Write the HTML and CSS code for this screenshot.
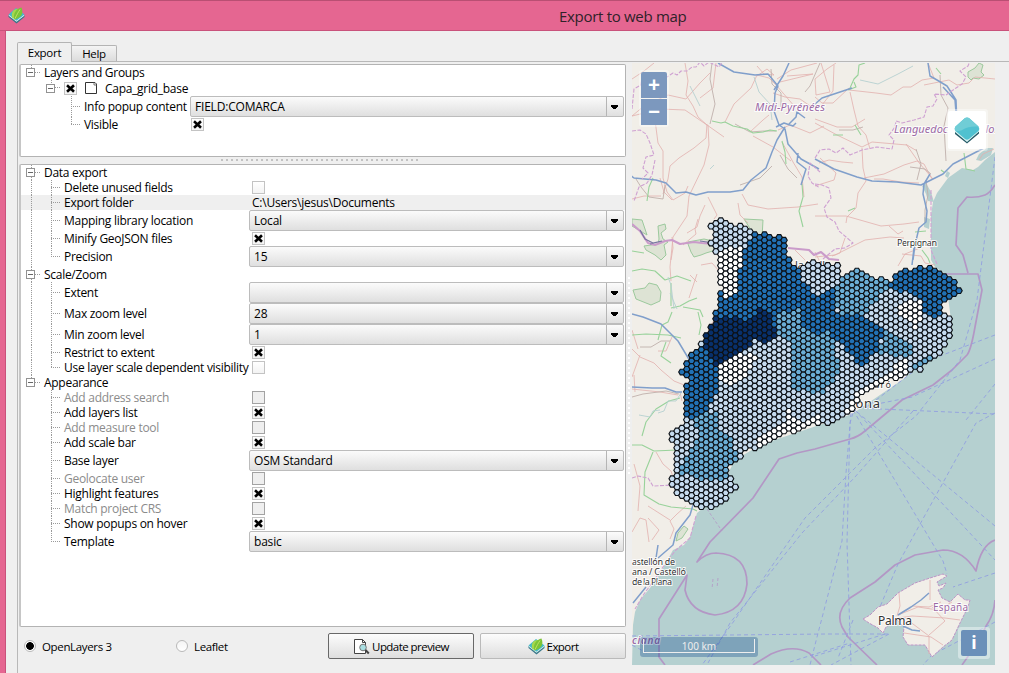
FILE: index.html
```html
<!DOCTYPE html>
<html lang="en">
<head>
<meta charset="utf-8">
<title>Export to web map</title>
<link rel="stylesheet" href="styles.css">
</head>
<body>
<svg class="defs" width="0" height="0">
  <symbol id="logo" viewBox="0 0 17 17">
    <path d="M.5 10l8 6.500 8-6.500v-2H.5z" fill="#397789"/>
    <path d="M.5 8.500l8 6.300 8-6.300L8.500 2z" fill="#e4f8f4"/>
    <path d="M.5 7.500L8 1l8.500 6.500-8 6.200z" fill="#45b9c9"/>
    <path d="M4.500 11.500C2.500 6 5 2 9.500 2c2.500 2 1.500 7-5 9.500z" fill="#a5d84c"/>
    <path d="M6 12.500C5 6 8.500 1.500 13.500.5c2.500 6-.5 11-7.500 12z" fill="#7cc437"/>
    <path d="M7 11.500c2-4 3-6 5-9" fill="none" stroke="#c4e56a" stroke-width=".9"/>
  </symbol>
  <symbol id="cross" viewBox="1 1 11 11">
    <path d="M4 4.200l5 4.600M9 4.200l-5 4.600" stroke="#000" stroke-width="2.600" stroke-linecap="square"/>
  </symbol>
</svg>
<div class="window">
  <header class="titlebar"><svg class="app-icon"><use href="#logo"/></svg><h1>Export to web map</h1></header>
  <main class="body">
    <nav class="tabs"><span class="tab active">Export</span><span class="tab">Help</span></nav>
    <div class="page">
      <section class="left">
        <div class="panel layers">
          <div class="row"><i class="root first"><b></b></i><span>Layers and Groups</span></div>
          <div class="row layer"><i class="sub"><b></b></i><svg class="check on"><use href="#cross"/></svg><svg class="shape" viewBox="0 0 14 14"><path d="M1.500 1.500h9.500l1.500 1.500v9.500h-11z" fill="#fff" stroke="#333"/><path d="M10 1v3h3" fill="none" stroke="#555" stroke-width=".8"/></svg><span>Capa_grid_base</span></div>
          <div class="row tall deep"><i class="branch"></i><span class="label">Info popup content</span><div class="combo"><span>FIELD:COMARCA</span></div></div>
          <div class="row deep"><i class="branch last"></i><span class="label">Visible</span><svg class="check on"><use href="#cross"/></svg></div>
        </div>
        <div class="splitter"></div>
        <div class="panel settings">
          <div class="row"><i class="root first"><b></b></i><span>Data export</span></div>
          <div class="row"><i class="trunk"></i><i class="branch"></i><span class="label">Delete unused fields</span><svg class="check"></svg></div>
          <div class="row selected"><i class="trunk"></i><i class="branch"></i><span class="label">Export folder</span><span class="path">C:\Users\jesus\Documents</span></div>
          <div class="row tall"><i class="trunk"></i><i class="branch"></i><span class="label">Mapping library location</span><div class="combo"><span>Local</span></div></div>
          <div class="row"><i class="trunk"></i><i class="branch"></i><span class="label">Minify GeoJSON files</span><svg class="check on"><use href="#cross"/></svg></div>
          <div class="row tall"><i class="trunk"></i><i class="branch last"></i><span class="label">Precision</span><div class="combo"><span>15</span></div></div>
          <div class="row"><i class="root"><b></b></i><span>Scale/Zoom</span></div>
          <div class="row tall"><i class="trunk"></i><i class="branch"></i><span class="label">Extent</span><div class="combo"></div></div>
          <div class="row tall"><i class="trunk"></i><i class="branch"></i><span class="label">Max zoom level</span><div class="combo"><span>28</span></div></div>
          <div class="row tall"><i class="trunk"></i><i class="branch"></i><span class="label">Min zoom level</span><div class="combo"><span>1</span></div></div>
          <div class="row"><i class="trunk"></i><i class="branch"></i><span class="label">Restrict to extent</span><svg class="check on"><use href="#cross"/></svg></div>
          <div class="row"><i class="trunk"></i><i class="branch last"></i><span class="label">Use layer scale dependent visibility</span><svg class="check"></svg></div>
          <div class="row"><i class="root end"><b></b></i><span>Appearance</span></div>
          <div class="row off"><i class="gap"></i><i class="branch"></i><span class="label">Add address search</span><svg class="check"></svg></div>
          <div class="row"><i class="gap"></i><i class="branch"></i><span class="label">Add layers list</span><svg class="check on"><use href="#cross"/></svg></div>
          <div class="row off"><i class="gap"></i><i class="branch"></i><span class="label">Add measure tool</span><svg class="check"></svg></div>
          <div class="row"><i class="gap"></i><i class="branch"></i><span class="label">Add scale bar</span><svg class="check on"><use href="#cross"/></svg></div>
          <div class="row tall"><i class="gap"></i><i class="branch"></i><span class="label">Base layer</span><div class="combo"><span>OSM Standard</span></div></div>
          <div class="row off"><i class="gap"></i><i class="branch"></i><span class="label">Geolocate user</span><svg class="check"></svg></div>
          <div class="row"><i class="gap"></i><i class="branch"></i><span class="label">Highlight features</span><svg class="check on"><use href="#cross"/></svg></div>
          <div class="row off"><i class="gap"></i><i class="branch"></i><span class="label">Match project CRS</span><svg class="check"></svg></div>
          <div class="row"><i class="gap"></i><i class="branch"></i><span class="label">Show popups on hover</span><svg class="check on"><use href="#cross"/></svg></div>
          <div class="row tall"><i class="gap"></i><i class="branch last"></i><span class="label">Template</span><div class="combo"><span>basic</span></div></div>
        </div>
        <footer class="actions">
          <label class="choice"><i class="radio picked"></i>OpenLayers 3</label>
          <label class="choice"><i class="radio"></i>Leaflet</label>
          <button class="button default"><svg class="preview-icon" viewBox="0 0 17 17"><path d="M1.500 1.500h8l3 3v11h-11z" fill="#fff" stroke="#444"/><path d="M9.500 1.500v3h3" fill="none" stroke="#444"/><circle cx="10" cy="9.500" r="3.300" fill="#a9dfe2" stroke="#777"/><path d="M12.500 12l3.300 3.500" stroke="#444" stroke-width="2"/></svg>Update preview</button>
          <button class="button"><svg class="export-icon"><use href="#logo"/></svg>Export</button>
        </footer>
      </section>
      <div class="grip"></div>
      <section class="map">
        <svg class="canvas" viewBox="632 63 363 602" width="363" height="602">
          <rect x="632" y="63" width="363" height="602" fill="#f1eee8"/>
          <path class="sea" d="M995 152L985 160 978 167 973 170 962 168 948 178 937 193 933 202 931 215 931 260 935 267 945 274 951 320 905 378 852 414 760 445 735 460 722 485 703 508 697 513 690 537 684 545 673 550 667 561 659 575 650 588 640 600 635 612 633 625 632 665H995z"/>
          <g class="sea"><path d="M976 160l3-6 8-6 6 0-2 7-10 6zM922 186l4-3 5 9 3 10-6-1-2-7zM924 217l6 2-1 10-5-2zM947 171l3 2-2 5-3-2z"/></g>
          <g class="park"><path d="M632 219l10 1 3 9 2 6-15-9zM658 226l7-2 1 5-5 4 2 6 5 3-4 3 2 10-5 5-6-5-9-5-2-4 14-2 1-5zM688 242l16-3 9 2 3 9-10 3-5 2-7 2-3-5-3-8zM744 219l19 1-1 18-9-5zM633 290l12-2 4-5 8 2 4 7-1 9-9 4-15-6zM968 72l7-4 4-5 4 2-2 7 3 3-5 4-6-1-2 2-3-3zM678 533l6-7 4 3-6 9-6 3z"/></g>
          <g class="minor">
            <path d="M632 79l12-8 10-8M685 63l3 18-2 14 7 11 5 11 9 8M700 98l13-10 3-25M632 116l12-10 24-11 18 4 14-16 10-10M632 116l29-7 24 1 22 15 17 12M707 124l-1 14-12 10-15 10-9 8-2 13-5 15M655 120l3 23 5 8 0 27 4 14 6 8 12-7 3-7M708 125l1 20-5 20-15 31-2 20-14 21-3 30 1 14M725 122l9-18 17-16 6-13 12 3 8 8 18 21M757 76l10-7 7 6-10-1-7-8M777 79l14-9 26-7M780 82l33-8-26 2M773 93l12 4 15 2 19 13M750 132l13-12 6-5M778 130l12-5 20 8 14-7M708 197l9 18-3 4M742 194l6 11 20 4 30-2 20-3M753 136l20 11 18 14M782 142l11 20 9 15 2 20M821 63l9 29-14 3-1-16 12-10 9-6M849 90l27 3 15 2 12-8 8 0 11-7 12-2-6-15M815 97l7 6 11 0 16-15M850 92l4 18 4 16 8 9 4 14M815 119l22 8 15 0 13-8M815 123l22 12 25 12 10-5 35 3 10 6M862 148l1 20 3 13-8 12-2 15-9 9-1 6M819 163l10-3 13 2 11 1M864 178l20-4 20-9 13-4 7 3 8 15M874 179l9 0 18 3 18 1M815 216l31 0 35 10 23-2 15-2M906 144l14 20 13 15M815 186l19-6 2-7-16-15M822 105l11-14 1-26M632 199l12-3 17 0M660 178l4 14 8 8M738 203l2 12 8 8M832 256l8-3 5-15M815 257l20-2 30-15 25-3 14 1M889 226l9 8 5-3M902 254l19 2 4 7 10 2M898 266l7-12 15-6M924 85l25-5 8 5 12-2 6-6 20 2M979 160l4-6 11-5"/>
            <path d="M698 219l-3 10 1 5-6 5-7 6M705 205l-5 11-3 11-10 6M632 349l8 8 14 6 7 7 13 11 15 6M640 355l-8 22M638 349l-6-19M672 237l1 11-2 12M717 316l-7 10-2 6M690 275l7 7M701 265l11-2 8 9M697 274l-8 24M721 270l9 9M634 375l1 17M632 389l28 3 18 3M672 337l-6 14-8 0M680 392l2 9M656 452l7 12 8 7 4 12M634 464l6 22-2 25M632 532l8-14 6 2 3 22M686 506l-9 8-7 7 4 8-4 10M670 520l-22-14M652 540l7-10-11-12M795 250l12 12M815 252l5 10 10 1"/>
          </g>
          <g class="dark-road"><path d="M712 63l-2 16 5 25-5 20M771 69l1 15 9 9 0 19M735 124l15 8 14-1 12 0M839 130l14 0 10-3M665 185l-2 14-14-2-8-10-5-8M740 185l20-7 12-12M780 155l8 14 9 9M940 75l1 20 7 13-4 18 2 35M926 180l2 15-3 15 0 12M640 347l11 0 10-6 9 0M632 397l11-3 23-3 13 3M820 63l-10 23-5 6M910 167l15 2 6 5M917 180l4-16-5-15"/></g>
          <g class="green"><path d="M712 121l9 2 4-1 8 4 14 3 6 4 10-1 7-2 7 1M782 141l3 11 1 12M802 184l1 13-4 14 4 16M653 178l-4 9-2 14M632 251l12 2M632 271l10-2 13 2 10 9 12-4 14 5M671 283l0 23M671 308l9-2 9-5 8-3M683 307l17 3 3 7M672 312l-4 10-6 3-4 15M632 335l14-1 22 1 13 3M698 312l3 13-2 10M666 342l-5 14 10 7M680 398l-11 3-13 8-10 13-4 14M632 445l10 0 12 6 23-1M653 452l-8 20-1 23 15 9 12 3 22 2 4 2M850 88l4-9 4-4 1-10 6-2M848 90l8-3-2-5M855 125l6 10M833 135l10 0M855 208l-7 3M964 153l2 16 9 2M915 232l11-1M922 250l6 8 2 5M936 68l5 6M941 170l4 3"/></g>
          <g class="motorway"><path d="M718 63l16 9 21 3 13-1 10 12-3 7-1 18 5 14 6 4 3 15 13 15 18 10M774 90l9-14 6-13M785 127l-8 13-5 12-6 16-15 12-8 10-13 2-22 0-12 3-10-3-10 1-10-10-10-3-22-2-9-7M798 153l-1 9 9 7-5 16M789 124l7-7 1-5 8 6M815 159l19 10 23 8 15 4 25 1 24 3 22-11 10-10 31-16M815 104l7-6 18-6 12-4M928 63l2 13 7 4 10 6 9 14 1 25M930 174l-6 10-1 10 4 17-1 11-7 6-4 17-2 15M914 248l-2 17M632 314l11 3 18 7 10 10 7 7 12 20M632 387l20 1 13 0 11 4 6 0M693 505l-3 10-14 18-3 12-15 13M658 545l-2 13M646 587l-13 16M943 87l12 13 2 25M776 127l8-4 9 3 3-3"/></g>
          <g class="admin"><path d="M632 109l2-20 7-4 1-8 13-4 12 4 6-4 4 2 4-4 6 0 5-4 4 0 4-5 4 4 5-4 10 5 5-7M632 131l8-1 6 4 4 9 4 12-8 2-3 11 5 5-6 6M655 160l-3 15-5 8-8 4-5 14M815 158l5-8 9-1 7 4 7-5 7 7 12-5 15-3 15 2 2-9-5-5 6-8 1-6 6 2 12-3 10-3 3-10 6-1 4-7-3-5 12 1 10-7 6-4 4-7-6-6 8-5 5-12-4-7M815 184l7 1 7 3 2 10-7 10 3 9 8 5 4 9 14 12-8 5-10 1-12 10M632 478l6-2 10 2 5 8 21-1M820 172l-10-9-2 13 4 7 8 5M931 190l0 60 6 14M696 516l-6 22-14 12-9 11-10 15-13 18-9 15"/></g>
          <path class="frontier" d="M632 224l8 7 8 12 7 2 10-4 7-1 8 4 14-2 8 1 12 1M788 248l21 2 5 5 7-3 8 7 10 1"/>
          <path class="frontier-core" d="M640 230l5 9 8 4 9-2M700 241l7 1 7 0M650 244l8-2"/>
          <path class="river" d="M668 277l3 8 3 24M670 293l7 16M658 413l6-2 4-10 8 0 5-8M639 415l11 2 3-6 7-1M690 86l10 20M754 77l5 15 11 12 2 16M710 169l4-4M860 80l18 4 20-10 15-8"/>
          <g class="sea-border"><path d="M995 185Q990 193 985 195Q977 198 967 197L958 208 956 245 963 255 968 273M938 274H978L982 290 975 327Q971 350 967 355L952 370 933 385 902 400 865 431Q858 437 850 439L815 449 797 453 779 459 753 498 710 542 697 562Q706 553 716 553Q747 554 747 584Q744 612 715 615Q690 612 685 590L687 575 659 619V657L665 665M995 540Q981 545 976 571Q963 550 943 550L915 555 895 565 875 582 850 598Q835 612 842 627L848 637 877 665M753 665L771 654Q793 644 809 653L821 665M962 665Q980 640 986 626 994 615 995 600"/></g>
          <g class="ferry"><path d="M995 157L977 300l-17 60-44 56-41 32-70 70-71 103-32 44M995 335l-68 26-60 46M995 359l-83 38-55 11M853 410l90 151 4 13M855 410l140 150M857 412l138 114M857 408l138 6M995 413l-19 10-78 141-26 62M853 413l-3 10-3 120 4 122M851 413l-5 60-4 68-26 100-6 24M995 384l-29 36M913 411l-58 66-53 56-72 90-22 40M632 636l195-2 62 0M632 645l15 8M853 620l-15 38M885 634l-70 22M889 634l-58 31M790 662l60-19M995 573l-42 14M995 622l-63 33-9 10"/></g>
          <path class="limit" d="M707 509l15 22M713 579l-1 10M718 578l-1 10"/>
          <path class="island" d="M863 619L870 615 878 607 887 604 898 593 915 583 930 578 943 574 947 576 937 582 939 586 946 583 943 588 938 590 942 598 950 602 958 594 965 600 970 600 968 607 960 623 952 640 943 647 932 657 925 645 908 645 903 637 904 627 897 620 886 627 883 633 878 628 869 623z"/>
          <g class="minor"><path d="M897 616l3-10-1-13M898 618l14-2 33 2 15 2M898 615l20-8 20 3 14-8M912 606l17 1 12-5M930 600l0-20M905 618l24 18 0 18M929 635l16-14-13-14M904 633l27 4 12 8"/></g>
          <g class="motorway"><path d="M898 615l13-8 10-7 8-7M903 626l9 4 8 1"/></g>
          <g class="labels">
            <text class="place" x="795" y="269" font-size="11">la Vella</text>
            <text class="place" x="863" y="388" font-size="9" textLength="28">ataró</text>
            <text class="place" x="814" y="408" font-size="13" textLength="66">Barcelona</text>
          </g>
          <g id="hexes"></g>
          <g class="labels">
            <text class="region" x="755" y="111" font-size="11" textLength="70">Midi-Pyrénées</text>
            <text class="region" x="894" y="133" font-size="11" textLength="107" lengthAdjust="spacingAndGlyphs">Languedoc-Roussillon</text>
            <text class="place" x="897" y="246" font-size="9" textLength="40">Perpignan</text>
            <text class="place" x="632" y="564.500" font-size="9" textLength="43">astellón de</text>
            <text class="place" x="632" y="574.500" font-size="9" textLength="54">ana / Castelló</text>
            <text class="place" x="632" y="584.500" font-size="9" textLength="40">de la Plana</text>
            <text class="region" x="632" y="644" font-size="10" font-weight="600" textLength="28">ciana</text>
            <text class="place" x="878" y="625" font-size="12" textLength="34">Palma</text>
            <text class="region upright" x="933" y="611" font-size="10" textLength="35">España</text>
          </g>
        </svg>
        <div class="zoom"><span>+</span><span>−</span></div>
        <div class="switcher"><svg viewBox="0 0 28 28"><path d="M2 15l12 10 12-10v2.500L14 27.500 2 18z" fill="#265b68"/><path d="M2 13l12 10 12-10v2.500L14 26 2 16z" fill="#d8f4f3"/><path d="M12 2q2-1.200 4 0l9.500 8.500q1.500 2 0 4.500L16 23q-2 1.400-4 0l-9.500-8q-1.500-2 0-4.500z" fill="#50c1d0"/><path d="M12 2q2-1.200 4 0l9.500 8.500Q15 10 11 13t-9 1.500q-1-2.500.5-4z" fill="#70cdd6"/></svg></div>
        <div class="scale"><span>100 km</span></div>
        <div class="info"><span>i</span></div>
      </section>
    </div>
  </main>
</div>
<script src="hexes.js"></script>
</body>
</html>
```
FILE: styles.css
```css
* { box-sizing: border-box; }
body { margin: 0; width: 1009px; height: 673px; overflow: hidden; font: 12px/15px "Open Sans", "Noto Sans", sans-serif; color: #000; }
.defs { display: block; }
.window { height: 673px; display: flex; flex-direction: column; background: #e56691; }
.titlebar { height: 31px; flex: none; display: flex; align-items: center; border-top: 1px solid #b94f73; border-bottom: 1px solid #c9527b; }
.app-icon { width: 17px; height: 17px; margin-left: 8px; margin-top: -1px; }
.titlebar h1 { margin: 0 0 0 534px; font-size: 15px; font-weight: 400; line-height: 20px; color: #2f2229; letter-spacing: -.3px; white-space: nowrap; }
.body { flex: 1; margin-left: 5px; border-left: 1px solid #c9527b; background: #efefef; padding: 11px 0 0 11px; min-height: 0; }
.tabs { display: flex; align-items: flex-end; height: 19px; }
.tab { height: 16px; width: 45px; text-align: center; font-size: 11.500px; letter-spacing: -.3px; border: 1px solid #b4b4b4; border-left: 0; border-bottom: 0; border-radius: 0 2px 0 0; background: linear-gradient(#f4f4f4, #dcdcdc); }
.tab.active { height: 20px; width: 55px; line-height: 20px; margin-bottom: -1px; border-left: 1px solid #b4b4b4; border-radius: 2px 2px 0 0; background: #efefef; z-index: 1; }
.page { display: flex; height: 620px; border-top: 1px solid #b8b8b8; border-left: 1px solid #b8b8b8; padding: 2px 0 0 1px; }
.left { width: 607px; flex: none; display: flex; flex-direction: column; }
.panel { background: #fff; border: 1px solid #b3b3b3; border-left-width: 2px; border-left-color: #c6c6c6; border-radius: 2px; padding-right: 1px; flex: none; }
.layers { height: 93px; }
.splitter { height: 7px; flex: none; width: 198px; margin-left: 202px; background: repeating-linear-gradient(90deg, #c2c2c2 0 2px, transparent 2px 5px) 0 2px / 100% 2px no-repeat; }
.settings { height: 463px; }
.row { display: flex; align-items: center; height: 15px; white-space: nowrap; letter-spacing: -.28px; }
.row.tall { height: 21px; }
.row.layer { height: 16px; padding-left: 20px; }
.row.deep { padding-left: 42px; }
.row.selected { background: #efefef; margin-right: -1px; }
.row.off .label { color: #8b8b8b; }
.label { width: 185px; }
.layers .label { width: 106px; }
.row i { flex: none; align-self: stretch; background-repeat: no-repeat; }
.root, .sub { width: 23px; display: flex; align-items: center; padding-left: 5px; background-image: repeating-linear-gradient(90deg, #9a9a9a 0 1px, transparent 1px 2px), repeating-linear-gradient(#9a9a9a 0 1px, transparent 1px 2px); background-size: 5px 1px, 1px 100%; background-position: 14px 7px, 10px 0; }
.root.end, .sub { background-size: 5px 1px, 1px 4px; }
.layers .root { background-size: 5px 1px, 1px 4px; }
.row b { width: 9px; height: 9px; border: 1px solid #929292; background: linear-gradient(#666, #666) center / 5px 1px no-repeat #fff; }
.trunk, .gap { width: 22px; }
.trunk { background-image: repeating-linear-gradient(#9a9a9a 0 1px, transparent 1px 2px); background-size: 1px 100%; background-position: 10px 0; }
.branch { width: 21px; background-image: repeating-linear-gradient(90deg, #9a9a9a 0 1px, transparent 1px 2px), repeating-linear-gradient(#9a9a9a 0 1px, transparent 1px 2px); background-size: 10px 1px, 1px 100%; background-position: 8px 50%, 8px 0; }
.branch.last { background-size: 10px 1px, 1px 50%; }
.check { width: 13px; height: 13px; flex: none; border: 1px solid #c3c3c3; background: linear-gradient(#fff, #f3f3f3); margin-left: 3px; }
.layer .check { margin: 0; }
.layers .deep .check { margin-left: 1px; }
.off .check { border-color: #a3a3a3; background: #efefef; }
.shape { width: 14px; height: 14px; margin: 0 7px; }
.path { margin-left: 3px; letter-spacing: -.24px; }
.combo { flex: 1; height: 21px; display: flex; align-items: center; padding-left: 4px; border: 1px solid #bcbcbc; border-radius: 2px; background: linear-gradient(#fbfbfb, #dfdfdf); letter-spacing: -.2px; }
.combo::after { content: ""; margin-left: auto; width: 16px; height: 19px; border-left: 1px solid #b5b5b5; background: linear-gradient(#000, #000) 4px 8px / 7px 1px no-repeat, linear-gradient(#000, #000) 4px 9px / 7px 1px no-repeat, linear-gradient(#000, #000) 5px 10px / 5px 1px no-repeat, linear-gradient(#000, #000) 6px 11px / 3px 1px no-repeat; }
.actions { display: grid; grid-template-columns: 152px 156px 146px 152px; padding: 6px 0 0 1px; }
.actions .button:last-child { margin-left: 6px; }
.choice { display: flex; align-items: center; gap: 6px; padding-left: 4px; font-size: 11.500px; letter-spacing: -.35px; }
.radio { width: 12px; height: 12px; border-radius: 50%; border: 1px solid #b9b9b9; background: linear-gradient(#f4f4f4, #fff); }
.radio.picked { background: radial-gradient(#000 0 3.500px, #fff 4.200px); }
.button { width: 146px; height: 26px; padding: 0; display: flex; align-items: center; justify-content: center; gap: 2px; border: 1px solid #bababa; border-radius: 2px; background: linear-gradient(#fcfcfc, #dedede); font: 11.500px/15px "Open Sans", sans-serif; letter-spacing: -.55px; color: #000; }
.button.default { border-color: #686868; }
.button svg { width: 17px; height: 17px; }
.grip { width: 6px; flex: none; background: repeating-linear-gradient(#fff 0 2px, transparent 2px 5px) 2px 213px / 2px 197px no-repeat; }
.map { position: relative; width: 363px; height: 602px; margin-top: -1px; overflow: hidden; font-family: "Noto Sans", sans-serif; }
.canvas { display: block; }
.canvas path { fill: none; stroke-linejoin: round; }
.canvas .sea, .canvas .sea path { fill: #b5d0d0; }
.canvas .park path { fill: #dde3d4; stroke: #9cc99d; stroke-width: 1; }
.minor { stroke: #e2b0ad; stroke-width: .8; }
.dark-road { stroke: #c0b0ac; stroke-width: .9; }
.green { stroke: #98d29a; stroke-width: 1.100; }
.motorway { stroke: #809fcb; stroke-width: 1.500; }
.admin { stroke: #cfa1d2; stroke-width: 1.100; stroke-dasharray: 4 1.500; }
.frontier { stroke: #ca9bca; stroke-width: 2.200; }
.frontier-core { stroke: #7775a1; stroke-width: 1.200; }
.river { stroke: #b5d0d0; stroke-width: .9; }
.sea-border { stroke: #b397c5; stroke-width: 1.700; }
.ferry { stroke: #929fe0; stroke-width: .9; stroke-dasharray: 4 3; }
.limit { stroke: #b397c5; stroke-width: .8; stroke-dasharray: 3 2; }
.canvas .island { fill: #f1eee8; stroke: #bd94c6; stroke-width: 1; stroke-dasharray: 3 1; }
.labels text { font-family: "Noto Sans", sans-serif; paint-order: stroke; stroke: #fff; stroke-opacity: .85; stroke-width: 2px; fill: #333; }
.labels .region { fill: #9b6aa5; font-style: italic; }
.labels .upright { font-style: normal; }
#hexes { stroke: #0d1116; stroke-width: 1.150; }
.zoom, .switcher, .scale, .info { position: absolute; border-radius: 3px; background: rgba(255, 255, 255, .4); }
.zoom { left: 7px; top: 7px; padding: 2px; display: grid; gap: 1px; }
.zoom span { width: 26px; height: 26px; background: #7c98be; color: #fff; font: 700 21px/25px "Noto Sans", sans-serif; text-align: center; }
.zoom span:first-child { border-radius: 2px 2px 0 0; }
.switcher { left: 314px; top: 46px; padding: 2px; }
.switcher svg { display: block; width: 38px; height: 38px; padding: 5px; background: #fff; border-radius: 2px; }
.scale { left: 8px; top: 574px; width: 118px; height: 20px; padding: 2px; background: rgba(0, 60, 136, .3); }
.scale span { display: block; width: 112px; height: 14px; margin-left: 1px; border: 1px solid #eee; border-top: 0; color: #eee; font-size: 10px; line-height: 15px; text-align: center; }
.info { left: 326px; top: 564px; padding: 3px; }
.info span { display: block; width: 26px; height: 26px; background: #6b90b9; border-radius: 2px; color: #fff; font: 700 18px/25px "Noto Sans", sans-serif; text-align: center; }
```
FILE: hexes.js
```js
// Hexagonal grid coloured by comarca; all coordinates are in map canvas units.
const outline = "710,226 712,221 720,218 735,225 741,223 757,233 770,235 780,235 787,242 788,258 792,264 800,268 806,262 822,263 838,264 841,272 840,278 848,272 862,269 878,278 888,282 900,272 914,267 937,267 946,273 960,287 960,295 948,302 942,302 945,313 951,320 951,338 945,348 930,362 922,369 912,372 905,377 893,379 880,384 868,391 859,398 855,407 849,414 842,420 828,424 815,423 802,430 783,435 760,447 745,452 735,462 725,472 735,482 736,489 720,505 702,510 690,505 677,497 673,485 665,479 675,473 675,450 668,437 670,429 683,426 683,420 682,407 682,390 688,382 681,373 685,362 698,347 704,332 713,325 711,313 720,310 717,295 722,288 716,275 716,253 710,243 714,235";
const zones = [
  ["#2171b5", "751,231 790,231 795,262 803,268 803,280 813,293 820,297 828,290 836,290 835,303 837,313 862,314 884,327 878,353 865,362 858,367 850,353 837,340 826,332 820,337 803,327 802,308 780,313 778,330 770,320 762,312 743,322 713,318 713,293 740,293 737,275 745,263 745,248 750,242"],
  ["#ffffff", "720,252 735,246 743,250 744,262 737,275 740,291 725,297 718,290 712,275 712,253"],
  ["#08306b", "709,311 717,316 745,320 760,310 771,315 772,328 780,333 768,342 760,344 755,340 745,350 738,356 728,360 718,369 712,365 707,352 700,338"],
  ["#ffffff", "718,367 728,360 738,355 756,355 754,364 740,382 725,385 718,377"],
  ["#2171b5", "698,344 708,350 713,367 719,370 720,390 712,400 708,412 700,420 688,420 678,405 677,360"],
  ["#6baed6", "778,315 802,306 803,327 820,337 828,328 837,350 838,373 828,387 822,394 793,390 789,353 793,343 779,334"],
  ["#6baed6", "836,290 845,270 862,266 890,282 880,298 871,303 870,315 838,313"],
  ["#2171b5", "886,283 915,262 940,264 964,288 962,298 948,302 947,313 937,319 923,313 923,305 914,298"],
  ["#ffffff", "911,299 922,301 922,317 915,328 900,315 897,310"],
  ["#6baed6", "883,328 895,338 912,347 912,355 893,358 880,352"],
  ["#6baed6", "911,362 930,358 926,368 911,370"],
  ["#ffffff", "905,357 912,374 900,383 882,392 866,405 854,420 845,410 858,393 872,381 890,374 893,363"],
  ["#ffffff", "821,416 826,428 805,432 760,450 757,440 765,431 785,425 785,409 791,410 797,423 815,415"],
  ["#6baed6", "692,420 708,412 718,413 720,433 733,437 737,462 725,472 731,480 710,482 680,473 684,458 698,440 698,428"]
];
const parse = s => s.split(" ").map(p => p.split(",").map(Number));
const inside = (x, y, poly) => {
  let hit = false;
  for (let i = 0, j = poly.length - 1; i < poly.length; j = i++) {
    const [a, b] = poly[i], [c, d] = poly[j];
    if ((b > y) !== (d > y) && x < (c - a) * (y - b) / (d - b) + a) hit = !hit;
  }
  return hit;
};
const border = parse(outline);
const areas = zones.map(([color, pts]) => [color, parse(pts)]);
const dx = 4.86, dy = 5.61, r = dx / 1.5;
let markup = "";
for (let col = 0; col < 64; col++) {
  for (let row = 0; row < 56; row++) {
    const x = 662.500 + col * dx, y = 215 + row * dy + (col % 2 ? dy / 2 : 0);
    if (!inside(x, y, border)) continue;
    let fill = "#c6dbef";
    for (const [color, poly] of areas) if (inside(x, y, poly)) fill = color;
    const pts = [0, 1, 2, 3, 4, 5].map(k => (x + r * Math.cos(k * Math.PI / 3)).toFixed(2) + "," + (y + r * Math.sin(k * Math.PI / 3)).toFixed(2));
    markup += `<polygon points="${pts.join(" ")}" fill="${fill}"/>`;
  }
}
document.getElementById("hexes").innerHTML = markup;
```
